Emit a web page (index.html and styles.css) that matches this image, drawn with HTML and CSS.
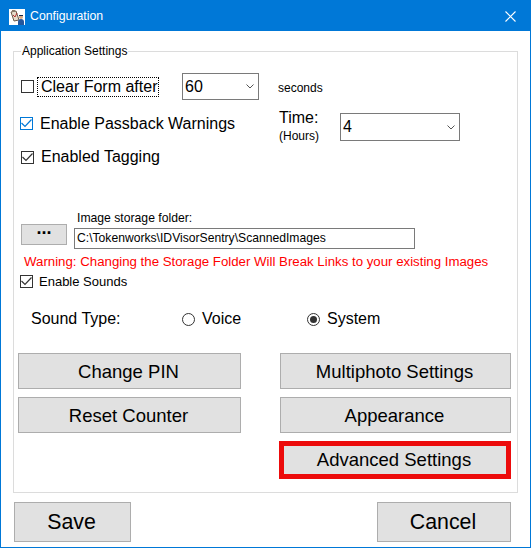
FILE: index.html
```html
<!DOCTYPE html>
<html lang="en">
<head>
    <meta charset="UTF-8">
    <title>Configuration</title>
    <link rel="stylesheet" href="styles.css">
</head>
<body>
    <div class="window">
        <div class="titlebar">
            <svg class="app-icon" width="16" height="16" viewBox="0 0 16 16">
                <rect width="16" height="16" fill="#fff"/>
                <path d="M2 3l5-1 3 9-5 1z" fill="#e6dccb" stroke="#6b5a4a"/>
                <path d="M3 1l3 0 0 2-3 0z" fill="#8a7a6a"/>
                <path d="M4 6l2 2 2-4" fill="none" stroke="#b03030"/>
                <circle cx="12" cy="8" r="2" fill="#d8a880"/>
                <path d="M9 16v-3q0-3 3-3t3 3v3z" fill="#24569c"/>
                <path d="M10 6h4v1h-4z" fill="#1a2a4a"/>
            </svg>
            <span class="title">Configuration</span>
            <svg class="close-icon" width="11" height="11" viewBox="0 0 11 11">
                <path d="M.5.5l10 10M10.500.5l-10 10" stroke="#fff" stroke-width="1.1" fill="none"/>
            </svg>
        </div>

        <div class="content">
            <fieldset class="group">
                <legend>Application Settings</legend>

                <div class="row row-clear">
                    <span class="check"></span>
                    <span class="text-big focus-label">Clear Form after</span>
                    <div class="combo combo-seconds">
                        <span>60</span>
                        <svg class="chevron" width="8" height="5" viewBox="0 0 8 5"><path d="M.5.5l3.500 3.500 3.500-3.500" fill="none" stroke="#555"/></svg>
                    </div>
                    <span class="text-small seconds">seconds</span>
                </div>

                <div class="row row-passback">
                    <span class="check check-on check-hot">
                        <svg width="11" height="9" viewBox="0 0 11 9"><path d="M.5 4l3.500 3.500 6.500-7" fill="none" stroke="#0078d7" stroke-width="1.200"/></svg>
                    </span>
                    <span class="text-big passback-label">Enable Passback Warnings</span>
                    <div class="time-label">
                        <span class="text-big">Time:</span>
                        <span class="text-small">(Hours)</span>
                    </div>
                    <div class="combo combo-time">
                        <span>4</span>
                        <svg class="chevron" width="8" height="5" viewBox="0 0 8 5"><path d="M.5.5l3.500 3.500 3.500-3.500" fill="none" stroke="#555"/></svg>
                    </div>
                </div>

                <div class="row row-tagging">
                    <span class="check check-on">
                        <svg width="11" height="9" viewBox="0 0 11 9"><path d="M.5 4l3.500 3.500 6.500-7" fill="none" stroke="#333" stroke-width="1.200"/></svg>
                    </span>
                    <span class="text-big tagging-label">Enabled Tagging</span>
                </div>

                <div class="row row-folder">
                    <button class="browse-btn">...</button>
                    <div class="folder-field">
                        <span class="folder-label">Image storage folder:</span>
                        <div class="path-box">C:\Tokenworks\IDVisorSentry\ScannedImages</div>
                    </div>
                </div>

                <div class="warning">Warning: Changing the Storage Folder Will Break Links to your existing Images</div>

                <div class="row row-sounds">
                    <span class="check check-on">
                        <svg width="11" height="9" viewBox="0 0 11 9"><path d="M.5 4l3.500 3.500 6.500-7" fill="none" stroke="#333" stroke-width="1.200"/></svg>
                    </span>
                    <span class="sounds-label">Enable Sounds</span>
                </div>

                <div class="row row-type">
                    <span class="text-big type-label">Sound Type:</span>
                    <span class="radio"></span>
                    <span class="text-big voice-label">Voice</span>
                    <span class="radio radio-on"></span>
                    <span class="text-big system-label">System</span>
                </div>

                <div class="actions">
                    <button class="btn">Change PIN</button>
                    <button class="btn">Multiphoto Settings</button>
                    <button class="btn">Reset Counter</button>
                    <button class="btn">Appearance</button>
                    <button class="btn btn-marked">Advanced Settings</button>
                </div>
            </fieldset>

            <div class="footer">
                <button class="btn btn-save">Save</button>
                <button class="btn btn-cancel">Cancel</button>
            </div>
        </div>
    </div>
</body>
</html>
```

FILE: styles.css
```css
* {
    box-sizing: border-box;
}

html, body {
    margin: 0;
    padding: 0;
}

body {
    font-family: "Liberation Sans", Arial, sans-serif;
    color: #000;
    background: #fff;
}

.window {
    width: 531px;
    height: 548px;
    border: 1px solid #0078d7;
    overflow: hidden;
    background: #fff;
}

.titlebar {
    height: 30px;
    background: #0078d7;
    color: #fff;
    display: flex;
    align-items: center;
    padding: 0 14px 0 8px;
}

.app-icon {
    margin-top: 1px;
}

.title {
    font-size: 12.3px;
    margin-left: 5px;
    flex: 1;
}

.content {
    padding: 13px 12px 0;
}

.group {
    margin: 0;
    padding: 0;
    height: 449px;
    border: 1px solid #dcdcdc;
    min-width: 0;
}

.group legend {
    font-size: 12px;
    line-height: 14px;
    padding: 0 1px;
    margin-left: 7px;
}

.row {
    display: flex;
    align-items: center;
}

.text-big {
    font-size: 16px;
}

.text-small {
    font-size: 12px;
}

.check {
    width: 13px;
    height: 13px;
    border: 1px solid #333;
    background: #fff;
    display: flex;
    align-items: center;
    justify-content: center;
    flex: none;
}

.check-hot {
    border-color: #0078d7;
}

.row-clear {
    padding-left: 7px;
    margin-top: 15px;
    height: 27px;
}

.focus-label {
    width: 122px;
    height: 20px;
    line-height: 18px;
    margin-left: 3px;
    padding-left: 3px;
    border: 1px dotted #000;
}

.combo {
    border: 1px solid #7a7a7a;
    background: #fff;
    display: flex;
    align-items: center;
    justify-content: space-between;
    font-size: 16px;
    padding: 0 4px 0 2px;
}

.combo-seconds {
    width: 77px;
    height: 27px;
    margin-left: 23px;
}

.seconds {
    margin-left: 19px;
    margin-top: 2px;
}

.row-passback {
    padding-left: 6px;
    margin-top: 13px;
    height: 28px;
}

.row-passback .check {
    margin-bottom: 7px;
}

.passback-label {
    margin-left: 7px;
    margin-bottom: 7px;
    width: 239px;
}

.time-label {
    width: 61px;
    display: flex;
    flex-direction: column;
    gap: 2px;
    margin-bottom: 2px;
    line-height: 15px;
}

.time-label .text-big {
    line-height: 18px;
}

.combo-time {
    width: 120px;
    height: 28px;
}

.row-tagging {
    padding-left: 7px;
    margin-top: 2px;
    height: 28px;
}

.tagging-label {
    margin-left: 7px;
}

.row-folder {
    padding-left: 7px;
    margin-top: 40px;
    align-items: flex-end;
}

.browse-btn {
    width: 46px;
    height: 21px;
    margin-bottom: 4px;
    padding: 0 0 13px;
    background: #e1e1e1;
    border: 1px solid #adadad;
    font-family: inherit;
    font-size: 18px;
    line-height: 6px;
    font-weight: bold;
}

.folder-field {
    margin-left: 7px;
}

.folder-label {
    display: block;
    font-size: 12.2px;
    line-height: 14px;
    margin-left: 3px;
    margin-bottom: 3px;
}

.path-box {
    width: 341px;
    height: 21px;
    line-height: 19px;
    border: 1px solid #7a7a7a;
    padding-left: 2px;
    font-size: 12.15px;
    white-space: nowrap;
}

.warning {
    color: #f00;
    font-size: 13.26px;
    line-height: 15px;
    margin: 5px 0 0 10px;
    white-space: nowrap;
}

.row-sounds {
    padding-left: 6px;
    margin-top: 5px;
}

.sounds-label {
    font-size: 13px;
    line-height: 15px;
    margin-left: 6px;
}

.row-type {
    padding-left: 17px;
    margin-top: 20px;
    height: 20px;
}

.type-label {
    width: 151px;
}

.radio {
    width: 13px;
    height: 13px;
    border: 1px solid #333;
    border-radius: 50%;
    background: #fff;
    flex: none;
    display: flex;
    align-items: center;
    justify-content: center;
}

.radio-on::after {
    content: "";
    width: 7px;
    height: 7px;
    border-radius: 50%;
    background: #333;
}

.voice-label {
    width: 105px;
    margin-left: 7px;
}

.system-label {
    margin-left: 7px;
}

.actions {
    display: grid;
    grid-template-columns: 223px 231px;
    column-gap: 39px;
    row-gap: 8px;
    margin: 24px 0 0 4px;
}

.btn {
    height: 36px;
    background: #e1e1e1;
    border: 1px solid #adadad;
    font-family: inherit;
    font-size: 18.5px;
    color: #000;
    padding: 2px 2px 0 0;
}

.btn-marked {
    grid-column: 2;
    height: 38px;
    width: 232px;
    margin-left: -1px;
    padding-top: 0;
    border: 5px solid #ec0b0b;
}

.footer {
    display: flex;
    justify-content: space-between;
    margin: 9px 7px 0 1px;
}

.btn-save, .btn-cancel {
    height: 40px;
    padding-top: 0;
    font-size: 21.33px;
}

.btn-save {
    width: 117px;
}

.btn-cancel {
    width: 134px;
}
```
